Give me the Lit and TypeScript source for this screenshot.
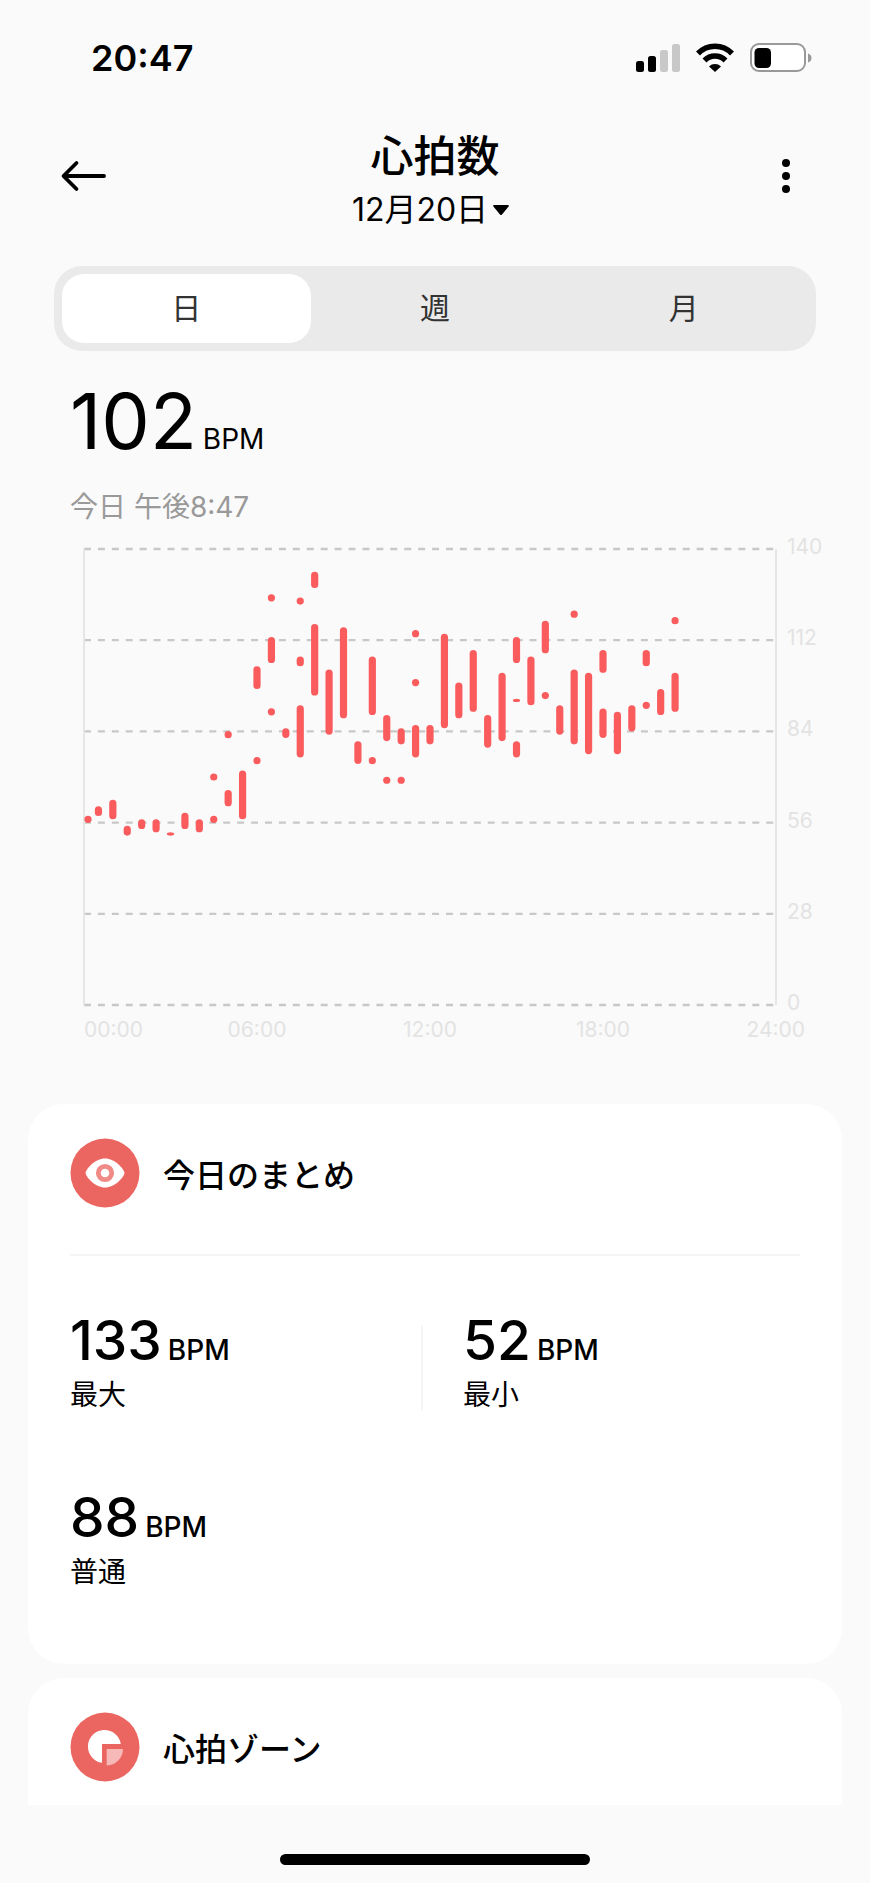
import { LitElement, html, svg, css } from "lit";
import { customElement, property, state } from "lit/decorators.js";
import { classMap } from "lit/directives/class-map.js";

/** [half-hour slot, highest BPM, lowest BPM] */
type Range = [number, number, number];

const RANGES: Range[] = [
  [0, 58, 56], [1, 61, 58], [2, 63, 57], [3, 55, 52], [4, 57, 54], [5, 57, 53],
  [6, 53, 52], [7, 59, 54], [8, 57, 53], [9, 71, 69], [9, 58, 56], [10, 84, 82],
  [10, 66, 61], [11, 72, 57], [12, 104, 97], [12, 76, 74], [13, 126, 124],
  [13, 113, 105], [13, 91, 89], [14, 85, 82], [15, 125, 123], [15, 107, 104],
  [15, 92, 76], [16, 133, 128], [16, 117, 95], [17, 103, 83], [18, 116, 88],
  [19, 81, 74], [20, 107, 89], [20, 76, 74], [21, 89, 81], [21, 70, 68],
  [22, 85, 80], [22, 70, 68], [23, 115, 113], [23, 100, 98], [23, 86, 76],
  [24, 86, 80], [25, 114, 85], [26, 99, 88], [27, 109, 90], [28, 89, 79],
  [29, 102, 81], [30, 113, 105], [30, 94, 93], [30, 81, 76], [31, 107, 92],
  [32, 118, 108], [32, 96, 94], [33, 92, 83], [34, 121, 119], [34, 103, 80],
  [35, 102, 77], [36, 109, 102], [36, 91, 82], [37, 90, 77], [38, 92, 84],
  [39, 109, 104], [39, 93, 91], [40, 97, 89], [41, 119, 117], [41, 102, 90],
];

const MAX_BPM = 140;
const LEVELS = [140, 112, 84, 56, 28, 0];
const HOURS = ["00:00", "06:00", "12:00", "18:00", "24:00"];

@customElement("status-bar")
export class StatusBar extends LitElement {
  static styles = css`
    :host {
      display: flex;
      align-items: center;
      justify-content: space-between;
      height: 116px;
      padding: 0 58px 0 91px;
    }
    .time {
      font: 600 36px/44px Inter, sans-serif;
    }
    svg {
      display: block;
    }
  `;

  render() {
    return html`
      <span class="time">20:47</span>
      <svg width="176" height="30" viewBox="0 0 176 30" aria-hidden="true">
        <rect x="0" y="18" width="8" height="11" rx="2.5" />
        <rect x="12" y="13" width="8" height="16" rx="2.5" />
        <rect x="24" y="7" width="8" height="22" rx="2.5" fill="#c8c8c8" />
        <rect x="36" y="1" width="8" height="28" rx="2.5" fill="#c8c8c8" />
        <g fill="none" stroke="#000" stroke-width="5.5">
          <path d="M62 10.500a23.500 23.500 0 0 1 34 0" />
          <path d="M68.500 17.500a14.500 14.500 0 0 1 21 0" />
        </g>
        <path d="M73 23.500a8.500 8.500 0 0 1 12 0l-6 5.500z" />
        <rect x="115" y="1" width="54" height="27" rx="8" fill="#fff" stroke="#999" stroke-width="2" />
        <rect x="118.500" y="5" width="16.500" height="20" rx="4.500" />
        <path d="M172 10.500q3.500 1 3.500 4.500t-3.500 4.500z" fill="#999" />
      </svg>
    `;
  }
}

@customElement("heart-chart")
export class HeartChart extends LitElement {
  static styles = css`
    :host {
      display: grid;
      grid-template-columns: 1fr 84px;
      padding: 0 10px 0 84px;
      color: #e3e3e3;
      font: 21px/24px Inter, sans-serif;
    }
    .plot {
      display: block;
      width: 100%;
      height: 456px;
      overflow: visible;
    }
    .grid {
      stroke: #c8c8c8;
      stroke-width: 2.3;
      stroke-dasharray: 5 5;
    }
    .edge {
      stroke: #e6e6e6;
      stroke-width: 2;
    }
    .bar {
      fill: #fa5c5e;
    }
    .levels {
      display: flex;
      flex-direction: column;
      justify-content: space-between;
      margin: -14px 0 -10px;
      padding-left: 11px;
    }
    .hours {
      display: grid;
      grid-template-columns: 1fr 2fr 2fr 2fr 1fr;
      margin-top: 13px;
      text-align: center;
    }
    .hours span:first-child {
      text-align: left;
    }
    .hours span:last-child {
      margin-right: -29px;
      text-align: right;
    }
  `;

  @property({ attribute: false }) ranges: Range[] = [];

  private y(bpm: number) {
    return `${100 - (bpm / MAX_BPM) * 100}%`;
  }

  private bar([slot, high, low]: Range) {
    const x = `${(slot / 48) * 100}%`;
    const shift = slot === 0 ? 4 : 0;
    if (high - low === 2) {
      return svg`<circle class="bar" cx=${x} cy=${this.y(low + 1)} r="3.6"
        transform="translate(${shift} 0)" />`;
    }
    return svg`<rect class="bar" x=${x} y=${this.y(high)}
      width="7.2" height="${((high - low) / MAX_BPM) * 100}%" rx="3.6"
      transform="translate(${shift - 3.6} 0)" />`;
  }

  render() {
    return html`
      <svg class="plot" role="img" aria-label="心拍数">
        ${LEVELS.map(
          (level) => svg`<line class="grid" pathLength="497"
            x1="0" x2="100%" y1=${this.y(level)} y2=${this.y(level)} />`
        )}
        <line class="edge" x1="0" x2="0" y1="0" y2="100%" />
        <line class="edge" x1="100%" x2="100%" y1="0" y2="100%" />
        ${this.ranges.map((range) => this.bar(range))}
      </svg>
      <div class="levels">${LEVELS.map((level) => html`<span>${level}</span>`)}</div>
      <div class="hours">${HOURS.map((hour) => html`<span>${hour}</span>`)}</div>
    `;
  }
}

@customElement("app-root")
export class AppRoot extends LitElement {
  static styles = css`
    :host {
      display: flex;
      flex-direction: column;
      min-height: 100vh;
      background: #fafafa;
      color: #000;
      font-family: Inter, "Noto Sans CJK JP", sans-serif;
    }
    h1, h2, p, dl, dd, dt {
      margin: 0;
      font-size: inherit;
      font-weight: inherit;
    }
    button {
      border: 0;
      padding: 0;
      background: none;
      color: inherit;
      font: inherit;
      cursor: pointer;
    }
    svg {
      display: block;
    }
    .header {
      display: grid;
      grid-template-columns: 48px 1fr 48px;
      align-items: center;
      padding: 12px 60px 0;
      height: 108px;
    }
    .icon-button {
      margin-bottom: 12px;
    }
    .heading {
      display: flex;
      flex-direction: column;
      align-items: center;
    }
    .title {
      font-size: 43px;
      line-height: 56px;
      font-weight: 500;
    }
    .date {
      display: flex;
      align-items: center;
      gap: 4px;
      padding-right: 8px;
      font-size: 32px;
      line-height: 52px;
    }
    .tabs {
      display: grid;
      grid-template-columns: repeat(3, 1fr);
      margin: 30px 54px 0;
      padding: 8px;
      border-radius: 28px;
      background: #eaeaea;
    }
    .tab {
      height: 69px;
      border-radius: 22px;
      color: #333;
      font-size: 30px;
      line-height: 69px;
    }
    .active {
      background: #fff;
    }
    .now {
      margin: 30px 70px 0;
    }
    .value {
      display: flex;
      align-items: baseline;
      gap: 6px;
    }
    .large {
      font-size: 77px;
      line-height: 80px;
    }
    .unit {
      font-size: 28px;
      line-height: 40px;
    }
    .when {
      margin-top: 26px;
      color: #999;
      font-size: 28px;
      line-height: 40px;
    }
    .chart {
      margin-top: 22px;
    }
    .card {
      margin: 0 28px;
      padding: 34px 42px 0;
      border-radius: 36px;
      background: #fff;
    }
    .summary {
      margin-top: 62px;
      padding-bottom: 69px;
    }
    .zones {
      margin-top: 14px;
      padding-bottom: 23px;
      border-radius: 36px 36px 0 0;
    }
    .card-head {
      display: flex;
      align-items: center;
      gap: 23px;
      height: 70px;
      font-size: 32px;
      font-weight: 500;
    }
    .stats {
      display: grid;
      grid-template-columns: 1fr 1fr;
      row-gap: 67px;
      margin-top: 46px;
      padding-top: 52px;
      border-top: 2px solid #f4f4f4;
    }
    .stat {
      display: flex;
      flex-direction: column-reverse;
      justify-content: flex-end;
      height: 110px;
    }
    .stat:first-child {
      background: linear-gradient(#f4f4f4, #f4f4f4) right 12px bottom 8px / 2px 84px no-repeat;
    }
    .stat:nth-child(2) {
      padding-left: 28px;
    }
    .stat .value {
      font-weight: 500;
    }
    .medium {
      font-size: 55px;
      line-height: 64px;
    }
    .label {
      font-size: 28px;
      line-height: 46px;
    }
    .home {
      width: 310px;
      height: 11px;
      margin: auto auto 18px;
      border-radius: 6px;
      background: #000;
    }
  `;

  @state() private period = "日";

  private stat(value: number, label: string) {
    return html`
      <div class="stat">
        <dt class="label">${label}</dt>
        <dd class="value"><span class="medium">${value}</span><span class="unit">BPM</span></dd>
      </div>
    `;
  }

  render() {
    return html`
      <status-bar></status-bar>
      <header class="header">
        <button class="icon-button" aria-label="戻る">
          <svg width="48" height="36" viewBox="0 0 48 36" fill="none" stroke="#000"
            stroke-width="3.8" stroke-linecap="round" stroke-linejoin="round">
            <path d="M44 18H4M16.500 5L3.500 18l13 13" />
          </svg>
        </button>
        <div class="heading">
          <h1 class="title">心拍数</h1>
          <button class="date">
            12月20日
            <svg width="18" height="12" viewBox="0 0 18 12">
              <path d="M2 1h14q1.500 0 .6 1.500L10 10.500q-1 1-2 0L1.400 2.500Q.5 1 2 1z" />
            </svg>
          </button>
        </div>
        <button class="icon-button" aria-label="メニュー">
          <svg width="48" height="36" viewBox="0 0 48 36">
            <circle cx="24" cy="5" r="4" />
            <circle cx="24" cy="18" r="4" />
            <circle cx="24" cy="31" r="4" />
          </svg>
        </button>
      </header>

      <nav class="tabs">
        ${["日", "週", "月"].map(
          (name) => html`<button
            class=${classMap({ tab: true, active: name === this.period })}
            aria-pressed=${name === this.period}
            @click=${() => (this.period = name)}
          >${name}</button>`
        )}
      </nav>

      <section class="now">
        <p class="value"><span class="large">102</span><span class="unit">BPM</span></p>
        <p class="when">今日 午後8:47</p>
      </section>
      <heart-chart class="chart" .ranges=${RANGES}></heart-chart>

      <section class="card summary">
        <div class="card-head">
          <svg width="70" height="70" viewBox="0 0 70 70">
            <circle cx="35" cy="35" r="34.5" fill="#ec6661" />
            <path d="M15.500 35C16 31 25 20.500 35 20.500S54 31 54.500 35C54 39 45 49.500 35 49.500S16 39 15.500 35z" fill="#fff" />
            <circle cx="35" cy="35" r="6.7" fill="none" stroke="#f08a87" stroke-width="4.8" />
          </svg>
          <h2>今日のまとめ</h2>
        </div>
        <dl class="stats">
          ${this.stat(133, "最大")} ${this.stat(52, "最小")} ${this.stat(88, "普通")}
        </dl>
      </section>

      <section class="card zones">
        <div class="card-head">
          <svg width="70" height="70" viewBox="0 0 70 70">
            <circle cx="35" cy="35" r="34.5" fill="#ec6661" />
            <path d="M50.800 32A16.500 16.500 0 1 0 32 50.800V32z" fill="#fff" />
            <path d="M36.700 37H53A16.500 16.500 0 0 1 36.700 53.500z" fill="#f7b9b8" />
          </svg>
          <h2>心拍ゾーン</h2>
        </div>
      </section>
      <div class="home"></div>
    `;
  }
}
